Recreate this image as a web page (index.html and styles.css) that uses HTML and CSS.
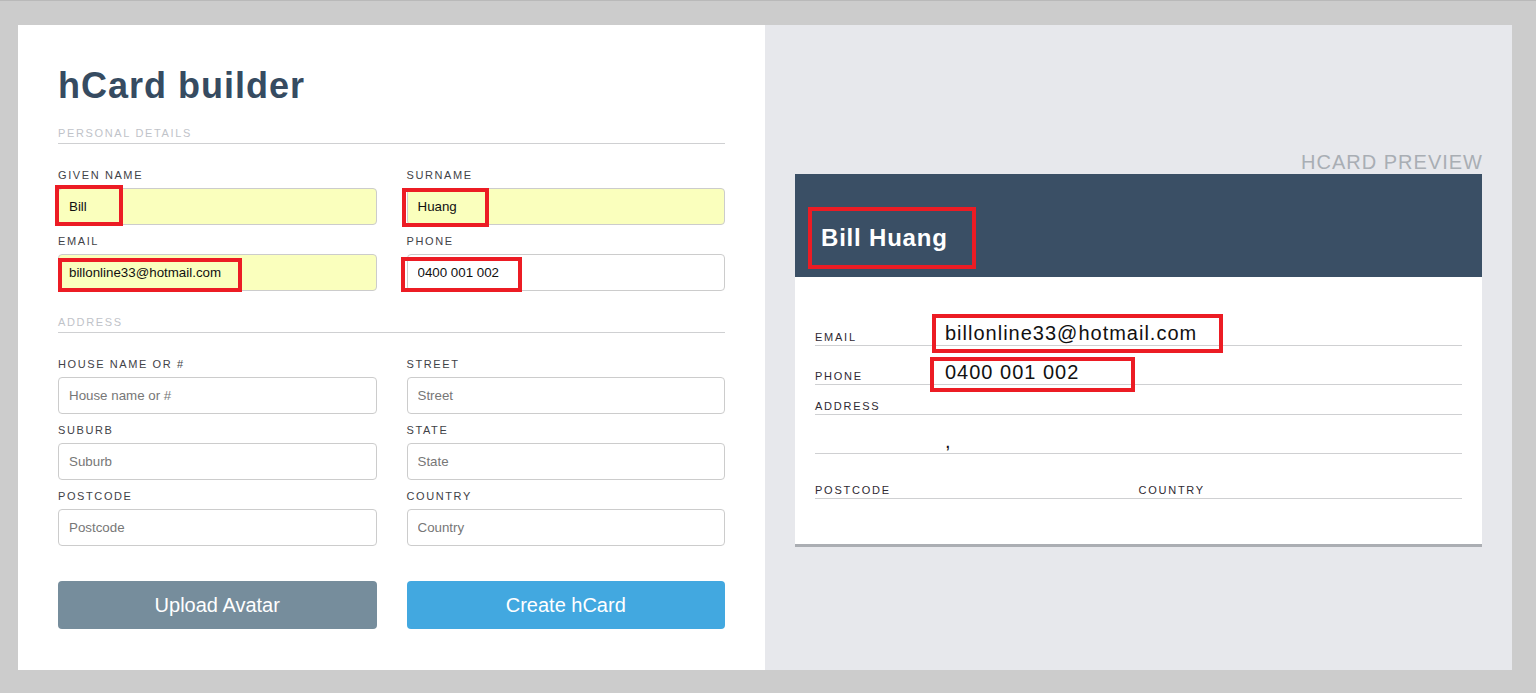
FILE: index.html
```html
<!DOCTYPE html>
<html lang="en">
<head>
<meta charset="utf-8">
<title>hCard builder</title>
<link rel="stylesheet" href="styles.css">
</head>
<body>
<div class="page">
  <div class="app">
    <section class="builder">
      <h1 class="title">hCard builder</h1>
      <div class="section-title">Personal details</div>
      <div class="fields">
        <div class="field"><label class="label">Given name</label><input class="input input--filled" value="Bill"></div>
        <div class="field"><label class="label">Surname</label><input class="input input--filled" value="Huang"></div>
        <div class="field"><label class="label">Email</label><input class="input input--filled" value="billonline33@hotmail.com"></div>
        <div class="field"><label class="label">Phone</label><input class="input" value="0400 001 002"></div>
      </div>
      <div class="section-title section-title--spaced">Address</div>
      <div class="fields">
        <div class="field"><label class="label">House name or #</label><input class="input" placeholder="House name or #"></div>
        <div class="field"><label class="label">Street</label><input class="input" placeholder="Street"></div>
        <div class="field"><label class="label">Suburb</label><input class="input" placeholder="Suburb"></div>
        <div class="field"><label class="label">State</label><input class="input" placeholder="State"></div>
        <div class="field"><label class="label">Postcode</label><input class="input" placeholder="Postcode"></div>
        <div class="field"><label class="label">Country</label><input class="input" placeholder="Country"></div>
      </div>
      <div class="actions">
        <button class="btn btn--upload">Upload Avatar</button>
        <button class="btn btn--create">Create hCard</button>
      </div>
    </section>
    <section class="preview">
      <div class="preview-title">hCard Preview</div>
      <div class="card">
        <div class="card-head"><span class="card-name">Bill Huang</span></div>
        <div class="card-body">
          <div class="row row--email"><span class="row-label">Email</span><span class="row-value">billonline33@hotmail.com</span></div>
          <div class="row row--phone"><span class="row-label">Phone</span><span class="row-value">0400 001 002</span></div>
          <div class="row row--address"><span class="row-label">Address</span></div>
          <div class="row row--address2"><span class="row-label"></span><span class="row-value">,</span></div>
          <div class="row-split">
            <div class="row row--half"><span class="row-label">Postcode</span></div>
            <div class="row row--half"><span class="row-label">Country</span></div>
          </div>
        </div>
      </div>
    </section>
    <div class="mark mark--given"></div>
    <div class="mark mark--surname"></div>
    <div class="mark mark--email"></div>
    <div class="mark mark--phone"></div>
    <div class="mark mark--name"></div>
    <div class="mark mark--pemail"></div>
    <div class="mark mark--pphone"></div>
  </div>
</div>
</body>
</html>
```

FILE: styles.css
```css
* { box-sizing: border-box; }

html, body {
  margin: 0;
  background: #ffffff;
  font-family: "Liberation Sans", Arial, sans-serif;
}

.page {
  background: #cccccc;
  border-top: 1px solid #b9b9b9;
  padding: 24px 24px 23px 18px;
}

.app {
  position: relative;
  display: grid;
  grid-template-columns: 747px 747px;
  height: 645px;
}

/* ---------- builder ---------- */
.builder {
  background: #ffffff;
  padding: 40px;
}

.title {
  margin: 0;
  font-size: 36px;
  font-weight: bold;
  letter-spacing: 1px;
  color: #364b61;
  line-height: normal;
}

.section-title {
  margin-top: 20px;
  font-size: 11px;
  line-height: 13px;
  letter-spacing: 1.65px;
  text-transform: uppercase;
  color: #bfc3c9;
  padding-bottom: 3px;
  border-bottom: 1px solid #cfd0d2;
}

.section-title--spaced { margin-top: 25px; }

.fields {
  display: grid;
  grid-template-columns: 1fr 1fr;
  column-gap: 30px;
  row-gap: 10px;
  margin-top: 25px;
}

.field { display: flex; flex-direction: column; }

.label {
  display: block;
  font-size: 11px;
  line-height: 13px;
  letter-spacing: 1.6px;
  text-transform: uppercase;
  color: #3f4247;
  margin-bottom: 6px;
}

.input {
  display: block;
  width: 100%;
  height: 37px;
  border: 1px solid #cccccc;
  border-radius: 4px;
  padding: 0 10px;
  font-family: "Liberation Sans", Arial, sans-serif;
  font-size: 13.333px;
  color: #111111;
  background: #ffffff;
  outline: none;
}

.input::placeholder { color: #777777; }

.input--filled { background: #faffbd; }

.actions {
  display: grid;
  grid-template-columns: 1fr 1fr;
  column-gap: 30px;
  margin-top: 35px;
}

.btn {
  height: 48px;
  border: none;
  border-radius: 4px;
  color: #ffffff;
  font-family: "Liberation Sans", Arial, sans-serif;
  font-size: 20px;
  cursor: pointer;
}

.btn--upload { background: #768d9c; }
.btn--create { background: #42a8e0; }

/* ---------- preview ---------- */
.preview {
  background: #e7e8ec;
  padding: 125px 30px 0;
}

.preview-title {
  text-align: right;
  font-size: 20px;
  line-height: 24px;
  letter-spacing: 1px;
  margin-right: -1px;
  text-transform: uppercase;
  color: #a9aeb4;
}

.card { background: #ffffff; }

.card-head {
  height: 103px;
  background: #3a4f65;
  display: flex;
  align-items: flex-end;
  padding: 0 26px 25px;
}

.card-name {
  font-size: 24px;
  font-weight: bold;
  letter-spacing: 0.8px;
  color: #ffffff;
}

.card-body {
  padding: 0 20px 45px;
  border-bottom: 3px solid #abaeb3;
}

.row {
  display: flex;
  align-items: flex-end;
  border-bottom: 1px solid #cfd0d2;
}

.row-label {
  flex: 0 0 130px;
  font-size: 11px;
  line-height: 15px;
  letter-spacing: 1.75px;
  text-transform: uppercase;
  color: #2f2a33;
}

.row-value {
  font-size: 20px;
  line-height: 24px;
  letter-spacing: 1px;
  color: #111111;
}

.row--email { padding-top: 44px; }
.row--phone { padding-top: 14px; }
.row--address { padding-top: 14px; }
.row--address2 { padding-top: 14px; }

.row-split {
  display: grid;
  grid-template-columns: 1fr 1fr;
}

.row--half { padding-top: 29px; }

/* ---------- annotation marks ---------- */
.mark {
  position: absolute;
  border: 4px solid #ec1c24;
  pointer-events: none;
}

.mark--given   { left: 37px;  top: 160px; width: 68px;  height: 41px; }
.mark--surname { left: 384px; top: 163px; width: 87px;  height: 39px; }
.mark--email   { left: 40px;  top: 233px; width: 184px; height: 34px; }
.mark--phone   { left: 383px; top: 232px; width: 121px; height: 35px; }
.mark--name    { left: 790px; top: 182px; width: 168px; height: 62px; }
.mark--pemail  { left: 914px; top: 289px; width: 291px; height: 39px; }
.mark--pphone  { left: 912px; top: 332px; width: 205px; height: 35px; }
```
